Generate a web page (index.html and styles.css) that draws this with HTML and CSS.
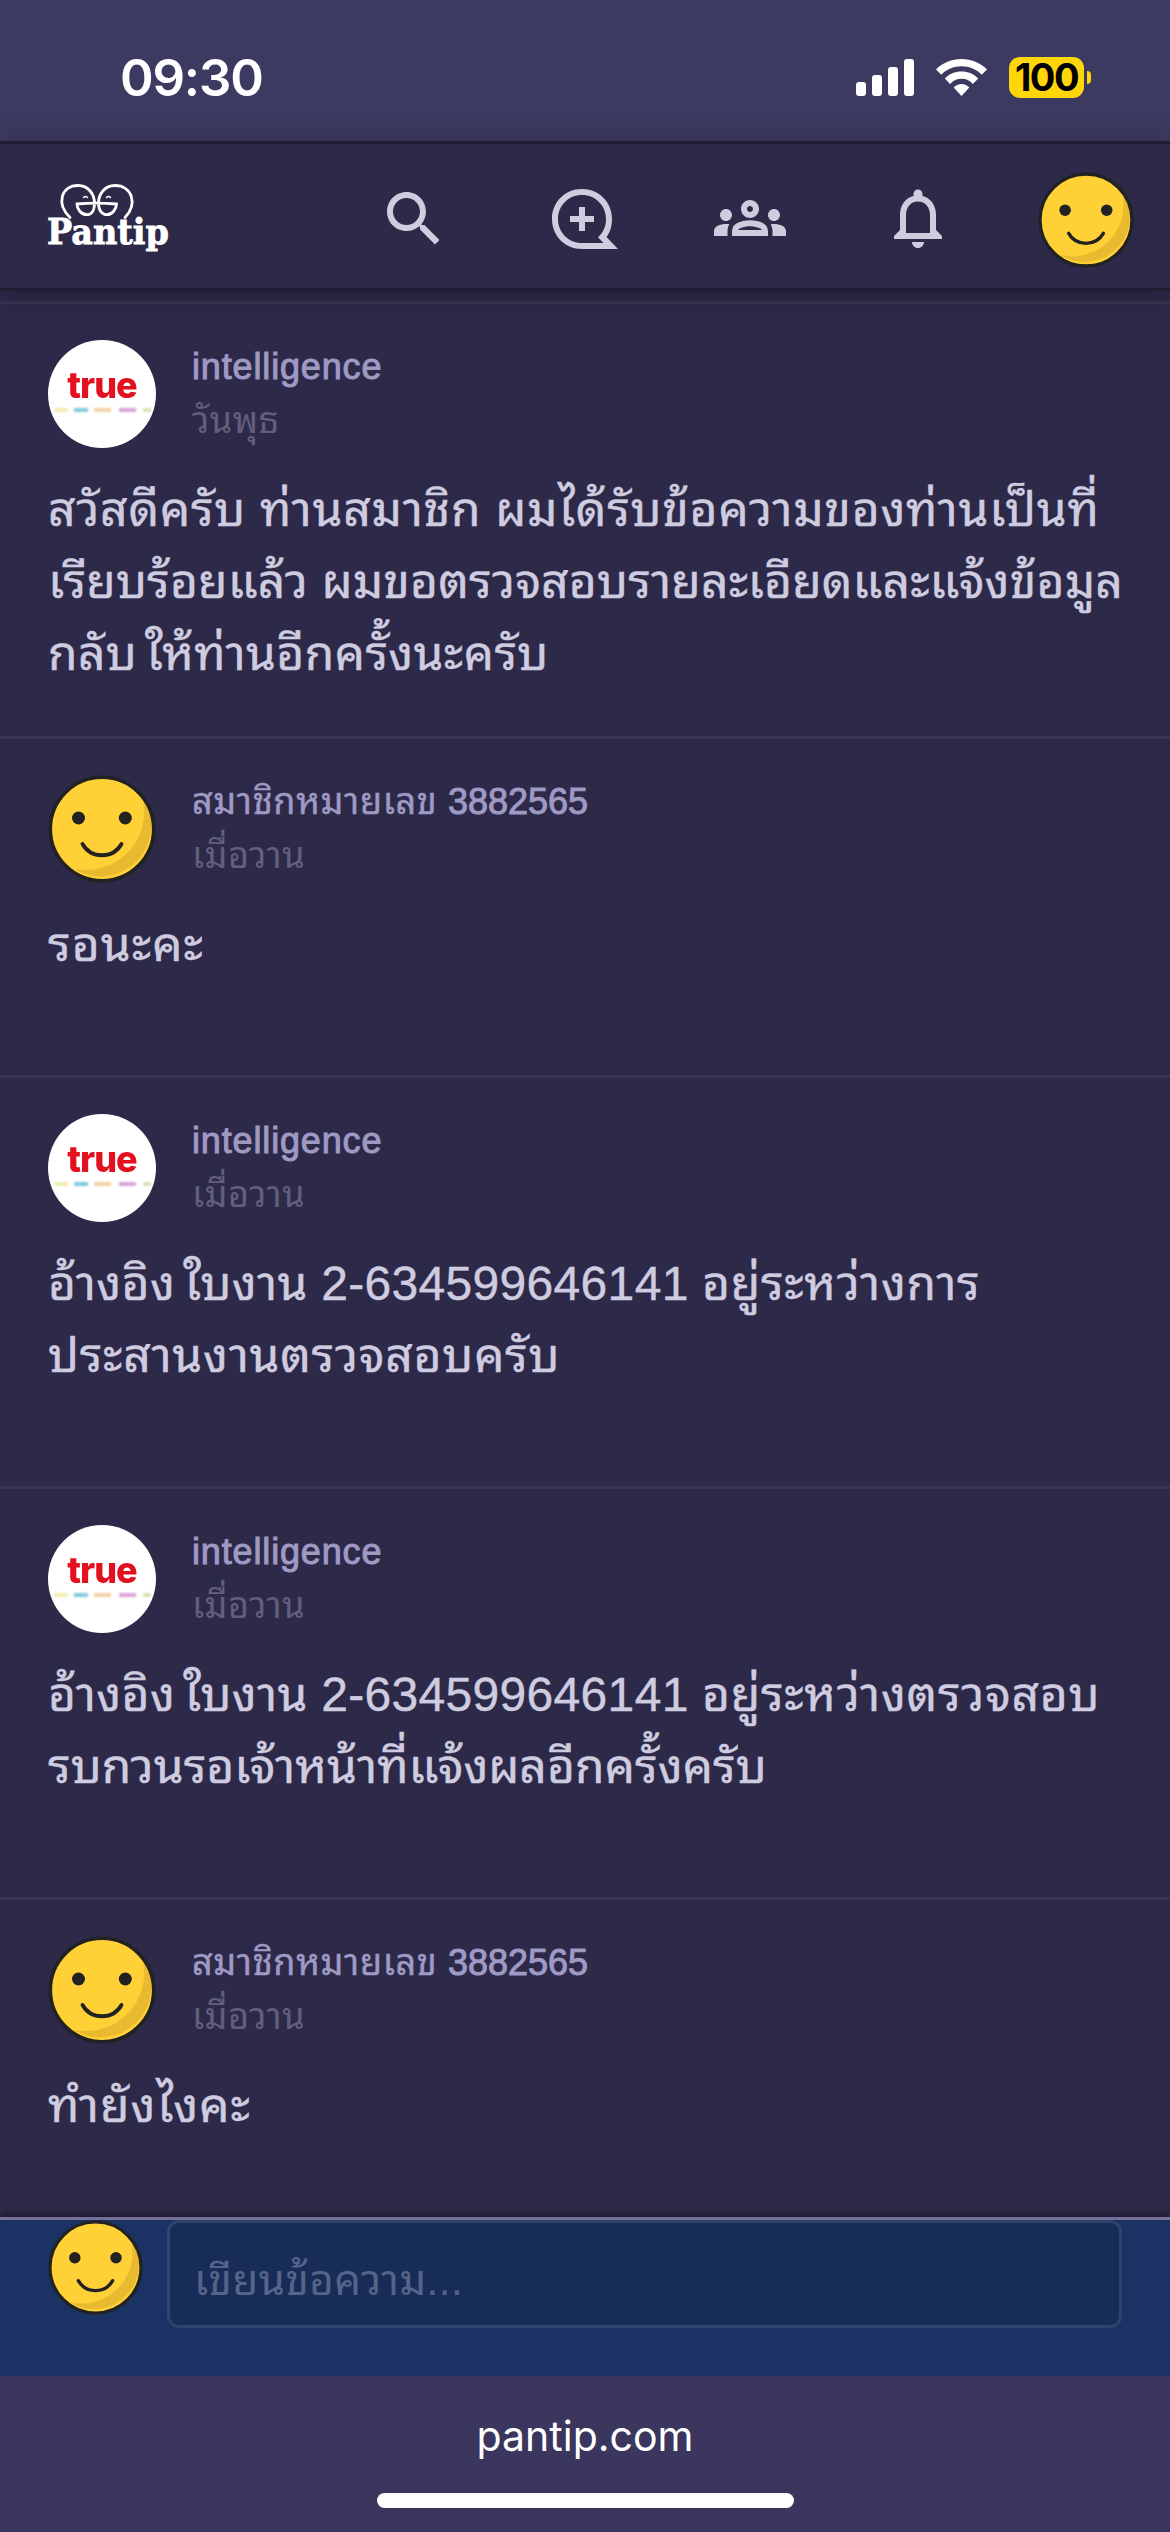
FILE: index.html
```html
<!DOCTYPE html>
<html lang="th">
<head>
<meta charset="utf-8">
<title>Pantip</title>
<link rel="stylesheet" href="styles.css">
</head>
<body>
<svg class="defs" width="0" height="0" aria-hidden="true">
  <symbol id="smiley" viewBox="0 0 108 108">
    <circle cx="54" cy="54" r="51.5" fill="#ffd137"/>
    <path d="M94 21A58 58 0 0 1 25 93.500A51 51 0 0 0 94 21z" fill="#e9ba30"/>
    <circle cx="54" cy="54" r="51.700" fill="none" stroke="#222" stroke-width="3.600"/>
    <circle cx="30.500" cy="43" r="6.500" fill="#222"/>
    <circle cx="77.300" cy="43" r="6.500" fill="#222"/>
    <path d="M34.500 69C43 84 65 84 73.500 69" fill="none" stroke="#222" stroke-width="3.800" stroke-linecap="round"/>
  </symbol>
  <symbol id="dots" viewBox="0 0 108 8">
    <path d="M6 4h14" stroke="#f1eeb0"/><path d="M26 4h14" stroke="#7fcbdc"/><path d="M46 4h17" stroke="#f2cfa4"/><path d="M71 4h17" stroke="#d9a3d6"/><path d="M95 4h8" stroke="#d5e4b4"/>
  </symbol>
</svg>

<div class="status">
  <span class="clock">09:30</span>
  <div class="indicators">
    <svg width="58" height="37" viewBox="0 0 58 37" fill="#fff"><rect y="23" width="10" height="14" rx="3"/><rect x="16" y="16" width="10" height="21" rx="3"/><rect x="32" y="8" width="10" height="29" rx="3"/><rect x="48" width="10" height="37" rx="3"/></svg>
    <svg class="wifi" width="51" height="37" viewBox="0 0 51 37" fill="#fff"><path d="M25.500 0C35 0 44.500 3.700 51 10.400L45.700 15.700C40.500 10.400 33.500 7.300 25.500 7.300S10.500 10.400 5.300 15.700L0 10.400C6.500 3.700 16 0 25.500 0z"/><path d="M25.500 12.500C32 12.500 38 15.100 42.200 19.600L36.900 24.900C34 21.700 30 19.800 25.500 19.800S17 21.700 14.100 24.900L8.800 19.600C13 15.100 19 12.500 25.500 12.500z"/><path d="M25.500 25C28.500 25 31.200 26.200 33.300 28.500L25.500 37L17.700 28.500C19.800 26.200 22.500 25 25.500 25z"/></svg>
    <div class="battery"><span class="level">100</span></div>
    <i class="battery-tip"></i>
  </div>
</div>

<header class="topbar">
  <svg class="logo" width="124" height="80" viewBox="0 0 124 80">
    <g fill="none" stroke="#fff" stroke-width="2.800" stroke-linecap="round">
      <path d="M22 33.500C8 20 13 1.500 30 1.500C41 1.500 46.500 11 46.500 19C46.500 27 43 30.700 39 30.700C33 30.700 29 25 29 20C40 19 56 19 68.500 20C68.500 25 64 30.700 59 30.700C54.500 30.700 50.500 27 50.500 19C50.500 11 56 1.500 67 1.500C84 1.500 90 20 77 33.500"/>
      <path d="M35.500 13.500q2-2 4 0M58.500 13.500q2-2 4 0" stroke-width="1.500"/>
    </g>
    <text x="-1" y="60" textLength="122" lengthAdjust="spacingAndGlyphs" class="logo-word">Pantip</text>
  </svg>
  <nav class="nav">
    <svg class="i-search" width="72" height="72" viewBox="0 0 24 24"><path d="M15.500 14h-.79l-.28-.27C15.410 12.590 16 11.110 16 9.500 16 5.910 13.090 3 9.500 3S3 5.910 3 9.500 5.910 16 9.500 16c1.610 0 3.090-.59 4.230-1.570l.27.28v.79l5 4.990L20.490 19l-4.990-5zm-6 0C7.010 14 5 11.990 5 9.500S7.010 5 9.500 5 14 7.010 14 9.500 11.990 14 9.500 14z"/></svg>
    <svg class="i-chat" width="66" height="60" viewBox="0 0 66 60"><path fill-rule="evenodd" d="M30 0C47 0 60 13 60 30C60 37 58 43.500 54.500 48L66 60H30C13 60 0 47 0 30S13 0 30 0zM30 6C16.500 6 6 16.500 6 30S16.500 54 30 54H51.500L46 48.200C51 44 54 37.500 54 30C54 16.500 43.500 6 30 6z"/><path d="M27 18h6v9h9v6h-9v9h-6v-9h-9v-6h9z"/></svg>
    <svg class="i-groups" width="72" height="72" viewBox="0 0 24 24"><path d="M4 13c1.100 0 2-.9 2-2s-.9-2-2-2-2 .9-2 2 .9 2 2 2zm1.130 1.100c-.37-.06-.74-.1-1.130-.1-.99 0-1.930.21-2.780.58C.48 14.900 0 15.620 0 16.430V18h4.500v-1.610c0-.83.23-1.610.63-2.290zM20 13c1.100 0 2-.9 2-2s-.9-2-2-2-2 .9-2 2 .9 2 2 2zm4 3.430c0-.81-.48-1.530-1.220-1.850-.85-.37-1.790-.58-2.780-.58-.39 0-.76.04-1.130.1.4.68.63 1.460.63 2.290V18H24v-1.570zm-7.760-2.780c-1.170-.52-2.610-.9-4.240-.9s-3.070.39-4.240.9C6.680 14.130 6 15.210 6 16.390V18h12v-1.610c0-1.180-.68-2.260-1.760-2.740zM8.070 16c.09-.23.13-.39.91-.69.97-.38 1.990-.56 3.020-.56s2.050.18 3.020.56c.77.3.81.46.91.69H8.070zM12 8c.55 0 1 .45 1 1s-.45 1-1 1-1-.45-1-1 .45-1 1-1m0-2c-1.660 0-3 1.340-3 3s1.340 3 3 3 3-1.340 3-3-1.340-3-3-3z"/></svg>
    <svg class="i-bell" width="72" height="72" viewBox="0 0 24 24"><path d="M12 22c1.100 0 2-.9 2-2h-4c0 1.100.9 2 2 2zm6-6v-5c0-3.070-1.630-5.640-4.500-6.320V4c0-.83-.67-1.500-1.500-1.500s-1.500.67-1.500 1.500v.68C7.640 5.360 6 7.920 6 11v5l-2 2v1h16v-1l-2-2zm-2 1H8v-6c0-2.480 1.510-4.500 4-4.500s4 2.020 4 4.500v6z"/></svg>
    <svg class="me" width="96" height="96"><use href="#smiley"/></svg>
  </nav>
</header>

<main class="thread">
  <article class="post post-1">
    <div class="author"><div class="avatar brand"><span>true</span><svg width="108" height="8"><use href="#dots"/></svg></div><div><div class="name latin">intelligence</div><div class="date">วันพุธ</div></div></div>
    <p class="message"><span class="w4">สวัสดีครับ ท่านสมาชิก ผมได้รับข้อความของท่านเป็นที่</span><br><span class="w1">เรียบร้อยแล้ว ผมขอตรวจสอบรายละเอียดและแจ้งข้อมูล</span><br><span class="w2">กลับ<span class="gap">ให้</span>ท่านอีกครั้งนะครับ</span></p>
  </article>
  <article class="post post-2">
    <div class="author"><svg class="avatar"><use href="#smiley"/></svg><div><div class="name">สมาชิกหมายเลข <b>3882565</b></div><div class="date">เมื่อวาน</div></div></div>
    <p class="message"><span class="w5">รอนะคะ</span></p>
  </article>
  <article class="post post-3">
    <div class="author"><div class="avatar brand"><span>true</span><svg width="108" height="8"><use href="#dots"/></svg></div><div><div class="name latin">intelligence</div><div class="date">เมื่อวาน</div></div></div>
    <p class="message"><span class="w2">อ้างอิง<span class="gap">ใ</span>บงาน</span> <span class="w2">2-634599646141</span> <span class="w4">อยู่ระหว่างการ</span><br><span class="w4">ประสานงานตรวจสอบครับ</span></p>
  </article>
  <article class="post post-4">
    <div class="author"><div class="avatar brand"><span>true</span><svg width="108" height="8"><use href="#dots"/></svg></div><div><div class="name latin">intelligence</div><div class="date">เมื่อวาน</div></div></div>
    <p class="message"><span class="w2">อ้างอิง<span class="gap">ใ</span>บงาน</span> <span class="w2">2-634599646141</span> <span class="w4">อยู่ระหว่างตรวจสอบ</span><br>รบกวนรอเจ้าหน้าที่แจ้งผลอีกครั้งครับ</p>
  </article>
  <article class="post post-5">
    <div class="author"><svg class="avatar"><use href="#smiley"/></svg><div><div class="name">สมาชิกหมายเลข <b>3882565</b></div><div class="date">เมื่อวาน</div></div></div>
    <p class="message"><span class="w5">ทำยังไงคะ</span></p>
  </article>
</main>

<section class="composer">
  <svg width="95" height="95"><use href="#smiley"/></svg>
  <div class="field">เขียนข้อความ...</div>
</section>

<footer class="browser">
  <span class="url">pantip.com</span>
  <i class="home"></i>
</footer>
</body>
</html>
```
FILE: styles.css
```css
* { box-sizing: border-box; }
body {
  margin: 0;
  width: 1170px;
  height: 2532px;
  overflow: hidden;
  display: flex;
  flex-direction: column;
  background: #2d2a49;
  font-family: "Liberation Sans", "Noto Sans Thai Looped", "Noto Looped Thai", Loma, Garuda, Umpush, Waree, "Noto Sans Thai", sans-serif;
  color: #d0cce0;
}
.defs { position: absolute; }
svg { display: block; flex: none; }

.status {
  height: 141px;
  flex: none;
  display: flex;
  justify-content: space-between;
  padding: 0 79px 0 120px;
  background: #3d3a61;
  color: #fff;
}
.clock {
  font: 600 51px/60px Inter, sans-serif;
  letter-spacing: -1.2px;
  margin-top: 48px;
}
.indicators {
  display: flex;
  align-items: center;
  height: 41px;
  margin-top: 57px;
}
.wifi { margin: 0 22px; }
.battery {
  width: 75px;
  height: 41px;
  border-radius: 11px;
  background: #ffd60a;
  color: #000;
  display: flex;
  align-items: center;
  justify-content: center;
}
.level { font: 700 38px/41px Inter, sans-serif; letter-spacing: -1.6px; }
.battery-tip {
  width: 4px;
  height: 13px;
  margin-left: 3px;
  border-radius: 0 5px 5px 0;
  background: #ffd60a;
}

.topbar {
  height: 150px;
  flex: none;
  display: flex;
  justify-content: space-between;
  align-items: center;
  padding: 0 36px 0 48px;
  background: #2d2a49;
  border-top: 3px solid #201d33;
  border-bottom: 3px solid #201d33;
  box-shadow: 0 6px 24px rgba(24, 22, 36, .5);
  position: relative;
}
.logo { margin-top: 16px; overflow: visible; }
.logo-word { font: 700 36px "DejaVu Serif", serif; fill: #fff; stroke: #fff; stroke-width: .8px; }
.nav { display: flex; align-items: center; fill: #d0cce0; }
.i-chat { margin: 6px 0 0 102px; }
.i-groups { margin: 4px 0 0 96px; }
.i-bell { margin: 3px 0 0 96px; }
.i-search { margin-top: 6px; }
.me { margin: 7px 0 0 84px; }

.thread {
  flex: none;
  height: 1926px;
  padding-top: 10px;
}
.post {
  border-top: 3px solid #383454;
  padding: 36px 48px 0;
}
.post-1 { height: 435px; }
.post-2 { height: 339px; }
.post-3, .post-4 { height: 411px; }
.author { display: flex; gap: 36px; }
.avatar { width: 108px; height: 108px; flex: none; }
.brand {
  border-radius: 50%;
  background: #fff;
  padding-top: 24px;
  display: flex;
  flex-direction: column;
  align-items: center;
}
.brand span { font: 800 36px/42px Inter, sans-serif; color: #e3101f; letter-spacing: -1px; filter: blur(.7px); }
.brand svg { stroke-width: 4px; filter: blur(1px); }
.name {
  font-size: 36px;
  line-height: 54px;
  letter-spacing: .65px;
  color: #9f99c4;
  white-space: nowrap;
  -webkit-text-stroke: .4px #9f99c4;
}
.name b { font-weight: 400; letter-spacing: 0; }
.name.latin { letter-spacing: .85px; }
.latin, .name b { -webkit-text-stroke: 1px #9f99c4; }
.date { font-size: 36px; line-height: 54px; letter-spacing: .5px; color: #625e7c; }
.message {
  margin: 26px 0 0;
  font-size: 48px;
  line-height: 72px;
  white-space: nowrap;
  -webkit-text-stroke: .4px #d0cce0;
}
.w1 { letter-spacing: .15px; }
.w2 { letter-spacing: .32px; }
.w4 { letter-spacing: .7px; }
.w5 { letter-spacing: 1px; }
.gap { margin-left: 8px; }

.composer {
  height: 159px;
  flex: none;
  display: flex;
  gap: 24px;
  padding: 0 48px;
  background: #1a3364;
  border-top: 3px solid #77709b;
  box-shadow: 0 -1px 9px rgba(10, 8, 20, .75);
  position: relative;
}
.field {
  flex: 1;
  height: 108px;
  padding: 5px 24px 0;
  border: 3px solid #2f446c;
  border-radius: 12px;
  background: #172d58;
  color: #56648a;
  font-size: 42px;
  line-height: 105px;
  letter-spacing: .5px;
}
.browser {
  flex: 1;
  display: flex;
  flex-direction: column;
  align-items: center;
  background: #3a365d;
  position: relative;
}
.url { margin-top: 35px; font: 400 41px/50px Inter, sans-serif; color: #fff; }
.home { width: 417px; height: 15px; margin-top: 32px; border-radius: 8px; background: #fff; }
```
